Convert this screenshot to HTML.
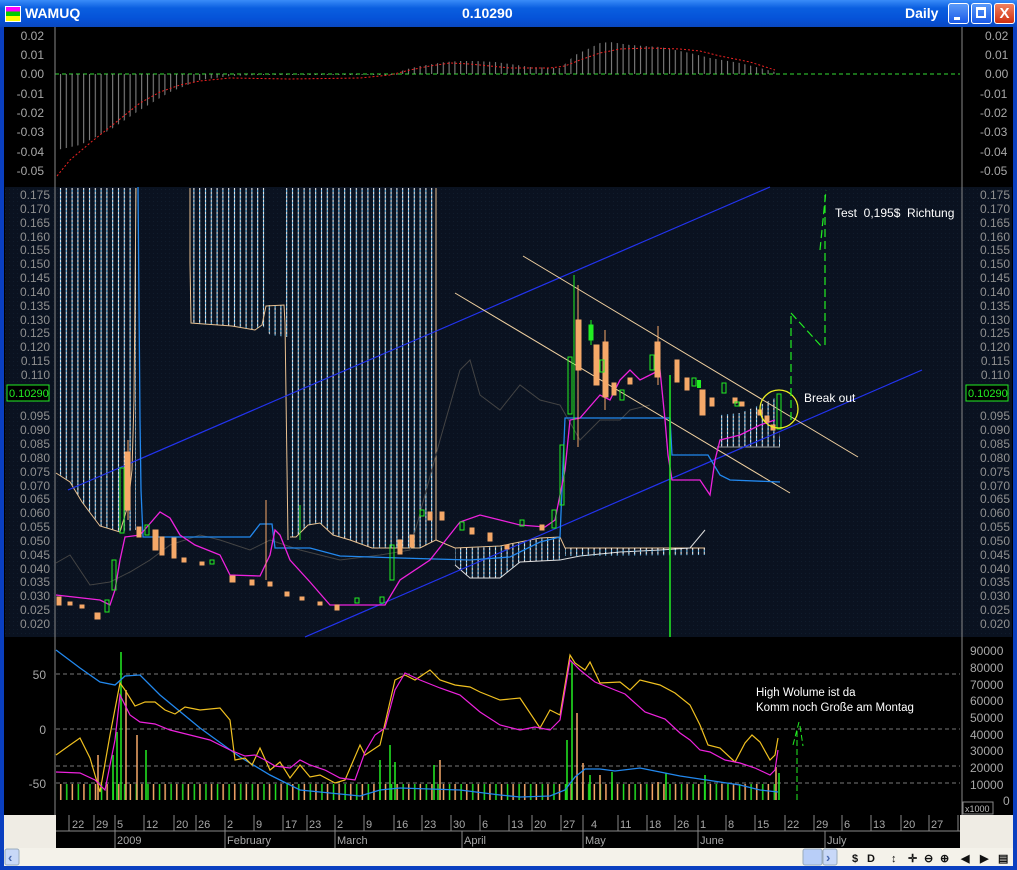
<!DOCTYPE html>
<html><head><meta charset="utf-8"><style>
html,body{margin:0;padding:0;width:1017px;height:870px;overflow:hidden;background:#0a3fc0;font-family:"Liberation Sans",sans-serif}
#title{position:absolute;left:0;top:0;width:1017px;height:27px;background:linear-gradient(#3a8cf8,#0a5fe0 30%,#0552d8 70%,#0a48c0);color:#fff}
.btn{position:absolute;top:3px;width:21px;height:21px;border:1px solid #fff;border-radius:3px;background:linear-gradient(#5a9af8,#1a5ae8);box-sizing:border-box}
svg text{font-family:"Liberation Sans",sans-serif}
</style></head><body>
<div id="title">
 <div style="position:absolute;left:5px;top:6px;width:14px;height:14px;background:linear-gradient(#f0f 0 33%,#0c0 33% 66%,#ff0 66%);border:1px solid #fff"></div>
 <div style="position:absolute;left:25px;top:5px;font-size:14px;font-weight:bold">WAMUQ</div>
 <div style="position:absolute;left:462px;top:5px;font-size:14px;font-weight:bold">0.10290</div>
 <div style="position:absolute;left:905px;top:5px;font-size:14px;font-weight:bold">Daily</div>
 <div class="btn" style="left:948px"><div style="position:absolute;left:5px;top:13px;width:6px;height:3px;background:#fff"></div></div>
 <div class="btn" style="left:971px"><div style="position:absolute;left:4px;top:3px;width:10px;height:11px;border:2px solid #fff;border-top-width:3px;box-sizing:border-box"></div></div>
 <div class="btn" style="left:994px;background:linear-gradient(#f08060,#d03010);color:#fff;font-weight:bold;font-size:15px;text-align:center;line-height:19px">X</div>
</div>
<svg width="1017" height="870" style="position:absolute;left:0;top:0" xmlns="http://www.w3.org/2000/svg">
<defs>
 <pattern id="hatch" width="5.8" height="4" patternUnits="userSpaceOnUse"><rect x="2" y="0" width="1" height="2" fill="#ffffff"/><rect x="2" y="2" width="1" height="2" fill="#7ad0ff"/></pattern>
 <pattern id="hist" width="5.8" height="10" patternUnits="userSpaceOnUse"><rect x="2" y="0" width="1" height="10" fill="#8a8a8a"/></pattern>
 <pattern id="volo" width="11.6" height="10" patternUnits="userSpaceOnUse"><rect x="2" y="0" width="1.5" height="10" fill="#f5a868"/><rect x="8" y="0" width="1.5" height="10" fill="#22dd22"/></pattern>
 <pattern id="dots" width="4" height="4" patternUnits="userSpaceOnUse"><rect width="4" height="4" fill="#0a1220"/><rect x="1" y="1" width="1" height="1" fill="#101c2c"/></pattern>
</defs>
<rect x="4" y="27" width="1009" height="821" fill="#000"/>
<rect x="5" y="187" width="1007" height="450" fill="url(#dots)"/>
<line x1="55" y1="74" x2="960" y2="74" stroke="#33dd33" stroke-dasharray="4,3"/>
<polygon points="57,74 57,150 80,145 110,130 140,110 170,92 200,80 230,76 260,75 400,75 400,74" fill="url(#hist)"/>
<polygon points="400,74 403,70 420,66 445,62 460,61 475,61 495,62 510,64 530,67 560,68 566,63 575,55 590,48 600,43 610,42 630,45 660,47 690,53 710,58 740,63 760,68 775,72 778,74" fill="url(#hist)"/>
<polyline points="57,176 70,160 90,143 110,127 125,115 140,103 160,92 180,85 200,81 230,78 290,79 360,78 390,75 410,70 430,66 450,63 470,64 490,66 510,68 550,68 565,66 580,60 600,53 620,49 650,48 680,49 700,51 720,56 750,62 775,70" fill="none" stroke="#ee2222" stroke-dasharray="2,2"/>
<line x1="55" y1="27" x2="55" y2="815" stroke="#888"/>
<line x1="962" y1="27" x2="962" y2="815" stroke="#888"/>
<g fill="#a8a8a8" font-size="12" text-anchor="end">
 <text x="44" y="40">0.02</text><text x="44" y="59">0.01</text><text x="44" y="78">0.00</text><text x="44" y="98">-0.01</text><text x="44" y="117">-0.02</text><text x="44" y="136">-0.03</text><text x="44" y="156">-0.04</text><text x="44" y="175">-0.05</text>
</g>
<g fill="#a8a8a8" font-size="12">
 <text x="985" y="40">0.02</text><text x="985" y="59">0.01</text><text x="985" y="78">0.00</text><text x="980" y="98">-0.01</text><text x="980" y="117">-0.02</text><text x="980" y="136">-0.03</text><text x="980" y="156">-0.04</text><text x="980" y="175">-0.05</text>
</g>
<g fill="#909090" font-size="12" text-anchor="end">
 <text x="50" y="199">0.175</text><text x="50" y="213">0.170</text><text x="50" y="227">0.165</text><text x="50" y="241">0.160</text><text x="50" y="254">0.155</text><text x="50" y="268">0.150</text><text x="50" y="282">0.145</text><text x="50" y="296">0.140</text><text x="50" y="310">0.135</text><text x="50" y="324">0.130</text><text x="50" y="337">0.125</text><text x="50" y="351">0.120</text><text x="50" y="365">0.115</text><text x="50" y="379">0.110</text><text x="50" y="420">0.095</text><text x="50" y="434">0.090</text><text x="50" y="448">0.085</text><text x="50" y="462">0.080</text><text x="50" y="476">0.075</text><text x="50" y="490">0.070</text><text x="50" y="503">0.065</text><text x="50" y="517">0.060</text><text x="50" y="531">0.055</text><text x="50" y="545">0.050</text><text x="50" y="559">0.045</text><text x="50" y="573">0.040</text><text x="50" y="586">0.035</text><text x="50" y="600">0.030</text><text x="50" y="614">0.025</text><text x="50" y="628">0.020</text>
</g>
<g fill="#909090" font-size="12" text-anchor="end">
 <text x="1010" y="199">0.175</text><text x="1010" y="213">0.170</text><text x="1010" y="227">0.165</text><text x="1010" y="241">0.160</text><text x="1010" y="254">0.155</text><text x="1010" y="268">0.150</text><text x="1010" y="282">0.145</text><text x="1010" y="296">0.140</text><text x="1010" y="310">0.135</text><text x="1010" y="324">0.130</text><text x="1010" y="337">0.125</text><text x="1010" y="351">0.120</text><text x="1010" y="365">0.115</text><text x="1010" y="379">0.110</text><text x="1010" y="420">0.095</text><text x="1010" y="434">0.090</text><text x="1010" y="448">0.085</text><text x="1010" y="462">0.080</text><text x="1010" y="476">0.075</text><text x="1010" y="490">0.070</text><text x="1010" y="503">0.065</text><text x="1010" y="517">0.060</text><text x="1010" y="531">0.055</text><text x="1010" y="545">0.050</text><text x="1010" y="559">0.045</text><text x="1010" y="573">0.040</text><text x="1010" y="586">0.035</text><text x="1010" y="600">0.030</text><text x="1010" y="614">0.025</text><text x="1010" y="628">0.020</text>
</g>
<rect x="7" y="385" width="42" height="16" fill="#000" stroke="#22ee22"/><text x="9" y="397" fill="#22ee22" font-size="11">0.10290</text>
<rect x="966" y="385" width="42" height="16" fill="#000" stroke="#22ee22"/><text x="968" y="397" fill="#22ee22" font-size="11">0.10290</text>
<polygon points="56,188 136,188 136,530 120,532 100,526 82,502 70,482 56,473" fill="url(#hatch)"/>
<polyline points="56,473 70,482 82,502 100,526 120,532 128,505 132,470 134,400 136,188" fill="none" stroke="#e8c090"/>
<polygon points="190,188 268,188 268,305 284,305 284,188 288,188 288,337 270,335 262,325 255,330 232,326 204,324 190,323" fill="url(#hatch)"/>
<polyline points="190,188 190,263 191,323 204,324 232,326 255,330 262,325 266,306 284,305 285,323 288,540" fill="none" stroke="#e8c090"/>
<polygon points="290,188 436,188 436,540 420,548 400,548 372,548 350,540 333,535 320,523 308,525 296,537 290,537" fill="url(#hatch)"/>
<polyline points="290,537 296,537 308,525 320,523 333,535 350,540 372,548 400,548 420,548 436,540 436,188" fill="none" stroke="#e8c090"/>
<polygon points="455,548 500,546 540,538 560,537 560,560 520,562 500,578 470,578 455,565" fill="url(#hatch)"/>
<polyline points="436,540 455,548 500,546 540,538 560,537 565,548 660,548 700,548 705,548" fill="none" stroke="#e8c090"/>
<polyline points="455,565 470,578 500,578 520,562 560,560 580,556 620,552 660,550 690,548 705,530" fill="none" stroke="#ddd"/>
<polygon points="565,548 705,548 705,555 565,556" fill="url(#hatch)"/>
<polygon points="720,415 740,413 760,405 775,398 780,440 780,447 717,447" fill="url(#hatch)"/>
<line x1="717" y1="447" x2="780" y2="447" stroke="#999"/>
<polyline points="56,563 70,555 90,585 110,582 130,572 150,560 170,545 200,535 220,540 250,550 270,540 300,550 340,560 380,555 410,550 440,440 460,370 470,360 480,395 500,410 520,385 540,400 560,405 580,440 600,420 620,420 630,410 650,405" fill="none" stroke="#444" />
<line x1="68" y1="490" x2="770" y2="187" stroke="#2233ee" stroke-width="1.2"/>
<line x1="305" y1="637" x2="922" y2="370" stroke="#2233ee" stroke-width="1.2"/>
<line x1="523" y1="256" x2="858" y2="457" stroke="#f0d0a0"/>
<line x1="455" y1="293" x2="790" y2="493" stroke="#f0d0a0"/>
<polyline points="138,187 140,420 141,490 143,537 250,537 260,524 272,524 275,548 310,548 340,556 400,558 470,560 510,557 540,542 560,537 565,418 670,418 672,455 708,455 720,475 730,480 780,482" fill="none" stroke="#2288ee" stroke-width="1.3"/>
<polyline points="56,595 100,600 110,605 115,590 120,560 125,537 140,535 160,512 170,518 180,535 195,545 220,555 230,575 260,576 270,555 275,530 280,535 290,560 310,582 330,605 385,605 400,580 430,560 460,522 480,515 500,520 520,525 545,527 555,520 565,470 570,420 580,418 600,395 610,400 620,380 630,370 640,380 650,375 660,370 665,420 668,455 672,480 700,480 710,495 715,460 720,440 740,435 760,425 775,420" fill="none" stroke="#ee22dd" stroke-width="1.3"/>
<g fill="#f5a868" stroke="#f5a868">
 <rect x="57" y="597" width="4" height="8"/><rect x="68" y="602" width="4" height="3"/><rect x="80" y="605" width="4" height="3"/><rect x="95" y="613" width="5" height="6"/><rect x="125" y="452" width="5" height="58"/><rect x="137" y="527" width="4" height="10"/><rect x="153" y="530" width="5" height="20"/><rect x="160" y="537" width="4" height="18"/><rect x="172" y="538" width="4" height="20"/><rect x="182" y="558" width="4" height="4"/><rect x="200" y="562" width="4" height="3"/><rect x="230" y="576" width="5" height="6"/><rect x="250" y="580" width="4" height="5"/><rect x="268" y="582" width="4" height="4"/><rect x="285" y="592" width="4" height="4"/><rect x="300" y="597" width="4" height="3"/><rect x="318" y="602" width="4" height="3"/><rect x="335" y="605" width="4" height="5"/><rect x="398" y="540" width="4" height="14"/><rect x="410" y="535" width="4" height="12"/><rect x="428" y="512" width="4" height="8"/><rect x="440" y="512" width="4" height="8"/><rect x="470" y="528" width="4" height="6"/><rect x="488" y="533" width="4" height="8"/><rect x="505" y="545" width="4" height="4"/><rect x="540" y="525" width="4" height="5"/>
 <rect x="576" y="320" width="5" height="50"/><rect x="594" y="345" width="5" height="40"/><rect x="603" y="342" width="5" height="55"/><rect x="612" y="383" width="4" height="12"/><rect x="628" y="378" width="4" height="6"/><rect x="655" y="342" width="5" height="35"/><rect x="675" y="360" width="4" height="22"/><rect x="685" y="378" width="4" height="12"/><rect x="700" y="390" width="5" height="25"/><rect x="710" y="398" width="4" height="8"/><rect x="733" y="398" width="4" height="5"/><rect x="740" y="402" width="4" height="4"/><rect x="758" y="410" width="4" height="5"/><rect x="765" y="416" width="4" height="6"/><rect x="771" y="425" width="4" height="5"/>
</g>
<g stroke="#f5a868"><line x1="128" y1="440" x2="128" y2="520"/><line x1="578" y1="285" x2="578" y2="447"/><line x1="658" y1="326" x2="658" y2="385"/><line x1="266" y1="500" x2="266" y2="580"/><line x1="605" y1="330" x2="605" y2="410"/></g>
<g fill="none" stroke="#22ee22">
 <rect x="105" y="600" width="4" height="12"/><rect x="112" y="560" width="4" height="30"/><rect x="120" y="468" width="4" height="65"/><rect x="145" y="525" width="4" height="10"/><rect x="210" y="560" width="4" height="4"/><rect x="355" y="598" width="4" height="5"/><rect x="380" y="597" width="4" height="6"/><rect x="390" y="545" width="4" height="35"/><rect x="420" y="510" width="4" height="6"/><rect x="460" y="522" width="4" height="8"/><rect x="520" y="520" width="4" height="6"/><rect x="552" y="510" width="4" height="18"/><rect x="560" y="445" width="4" height="60"/><rect x="568" y="357" width="4" height="57"/><rect x="589" y="325" width="4" height="15"/><rect x="600" y="360" width="4" height="12"/><rect x="620" y="390" width="4" height="10"/><rect x="650" y="355" width="4" height="15"/><rect x="692" y="378" width="4" height="8"/><rect x="722" y="383" width="4" height="10"/><rect x="735" y="402" width="4" height="4"/><rect x="777" y="394" width="4" height="35"/>
</g>
<g stroke="#22ee22"><line x1="574" y1="275" x2="574" y2="440"/><line x1="591" y1="320" x2="591" y2="345"/><line x1="670" y1="375" x2="670" y2="637" stroke-width="1.5"/><line x1="300" y1="505" x2="300" y2="540"/></g>
<g fill="#22ee22"><rect x="589" y="325" width="4" height="15"/><rect x="697" y="380" width="4" height="8"/></g>
<circle cx="779" cy="409" r="19" fill="none" stroke="#eeee22" stroke-width="1.3"/>
<g stroke="#22ee22" stroke-dasharray="8,4" fill="none" stroke-width="1.2">
 <line x1="791" y1="420" x2="791" y2="312"/><line x1="791" y1="313" x2="822" y2="347"/><line x1="825" y1="345" x2="825" y2="195"/><line x1="820" y1="250" x2="826" y2="190"/>
</g>
<text x="835" y="217" fill="#fff" font-size="12" style="white-space:pre" xml:space="preserve">Test  0,195$  Richtung</text>
<text x="804" y="402" fill="#fff" font-size="12">Break out</text>
<g stroke="#777" stroke-dasharray="4,3"><line x1="56" y1="674" x2="960" y2="674"/><line x1="56" y1="729" x2="960" y2="729"/><line x1="56" y1="766" x2="960" y2="766"/><line x1="56" y1="783" x2="960" y2="783"/></g>
<rect x="56" y="784" width="722" height="16" fill="url(#volo)"/>
<g stroke-width="1.5">
 <line x1="121" y1="800" x2="121" y2="652" stroke="#22ee22"/><line x1="117" y1="800" x2="117" y2="732" stroke="#22ee22"/><line x1="126" y1="800" x2="126" y2="690" stroke="#f5a868"/><line x1="113" y1="800" x2="113" y2="755" stroke="#22ee22"/><line x1="137" y1="800" x2="137" y2="735" stroke="#f5a868"/><line x1="98" y1="800" x2="98" y2="755" stroke="#f5a868"/><line x1="146" y1="800" x2="146" y2="750" stroke="#22ee22"/><line x1="380" y1="800" x2="380" y2="760" stroke="#22ee22"/><line x1="390" y1="800" x2="390" y2="745" stroke="#22ee22"/><line x1="395" y1="800" x2="395" y2="762" stroke="#22ee22"/><line x1="567" y1="800" x2="567" y2="740" stroke="#22ee22"/><line x1="572" y1="800" x2="572" y2="662" stroke="#22ee22"/><line x1="577" y1="800" x2="577" y2="713" stroke="#f5a868"/><line x1="583" y1="800" x2="583" y2="763" stroke="#f5a868"/><line x1="590" y1="800" x2="590" y2="775" stroke="#22ee22"/><line x1="600" y1="800" x2="600" y2="775" stroke="#f5a868"/><line x1="612" y1="800" x2="612" y2="772" stroke="#22ee22"/><line x1="666" y1="800" x2="666" y2="773" stroke="#22ee22"/><line x1="658" y1="800" x2="658" y2="782" stroke="#f5a868"/><line x1="705" y1="800" x2="705" y2="775" stroke="#22ee22"/><line x1="434" y1="800" x2="434" y2="765" stroke="#22ee22"/><line x1="440" y1="800" x2="440" y2="760" stroke="#f5a868"/><line x1="776" y1="800" x2="776" y2="767" stroke="#f5a868"/><line x1="779" y1="800" x2="779" y2="773" stroke="#22ee22"/>
</g>
<polyline points="56,650 80,668 100,682 115,685 125,676 140,675 160,695 200,728 240,757 270,775 300,790 330,793 360,796 380,790 400,788 460,790 500,795 520,797 550,796 565,790 575,777 585,769 600,769 615,771 640,768 660,772 680,776 700,779 720,782 740,785 760,790 778,792" fill="none" stroke="#2288ee" stroke-width="1.3"/>
<polyline points="56,755 70,745 80,738 90,758 100,792 110,735 120,683 125,690 135,706 145,702 155,702 165,710 175,714 185,707 200,710 220,708 230,720 235,760 245,758 252,765 260,748 270,770 280,762 290,778 300,765 310,777 320,775 335,783 345,780 360,745 365,755 380,745 395,680 405,675 415,680 430,670 440,680 455,685 470,687 480,692 500,700 520,698 540,728 550,710 560,715 570,655 575,663 585,670 590,662 600,683 620,682 630,690 640,680 660,685 675,693 690,705 700,725 708,745 720,748 735,762 745,743 752,735 760,742 770,760 775,755 778,738" fill="none" stroke="#f0c020" stroke-width="1.2"/>
<polyline points="56,772 80,773 95,780 105,790 115,740 120,695 130,715 140,722 155,724 170,730 190,735 210,740 230,750 245,756 255,755 265,760 275,766 290,768 300,760 310,765 325,770 340,778 355,780 365,752 375,735 385,728 395,690 405,673 420,680 440,688 460,695 480,712 500,725 520,730 535,727 550,730 560,720 570,660 580,670 595,682 615,690 625,694 645,712 665,719 680,733 690,740 700,750 710,752 725,760 740,763 755,768 770,775 775,770 778,750" fill="none" stroke="#ee22dd" stroke-width="1.2"/>
<g stroke="#22ee22" stroke-dasharray="6,3"><line x1="797" y1="800" x2="797" y2="728"/><line x1="793" y1="745" x2="799" y2="722"/><line x1="800" y1="726" x2="803" y2="746"/></g>
<text x="756" y="696" fill="#fff" font-size="11.5">High Wolume ist da</text>
<text x="756" y="711" fill="#fff" font-size="11.5">Komm noch Große am Montag</text>
<g fill="#a8a8a8" font-size="12" text-anchor="end"><text x="46" y="679">50</text><text x="46" y="734">0</text><text x="46" y="788">-50</text></g>
<g fill="#a8a8a8" font-size="12"><text x="970" y="655">90000</text><text x="970" y="672">80000</text><text x="970" y="689">70000</text><text x="970" y="705">60000</text><text x="970" y="722">50000</text><text x="970" y="739">40000</text><text x="970" y="755">30000</text><text x="970" y="772">20000</text><text x="970" y="789">10000</text><text x="1003" y="805">0</text></g>
<rect x="963" y="802" width="30" height="12" fill="none" stroke="#888"/><text x="965" y="812" fill="#bbb" font-size="9">x1000</text>
<rect x="4" y="815" width="52" height="33" fill="#efece4"/>
<rect x="960" y="815" width="53" height="33" fill="#efece4"/>
<rect x="56" y="815" width="904" height="33" fill="#000"/>
<line x1="56" y1="831" x2="960" y2="831" stroke="#888"/>
<g stroke="#888"><line x1="69" y1="815" x2="69" y2="831"/><line x1="94" y1="815" x2="94" y2="831"/><line x1="115" y1="815" x2="115" y2="848"/><line x1="144" y1="815" x2="144" y2="831"/><line x1="174" y1="815" x2="174" y2="831"/><line x1="196" y1="815" x2="196" y2="831"/><line x1="225" y1="815" x2="225" y2="848"/><line x1="254" y1="815" x2="254" y2="831"/><line x1="283" y1="815" x2="283" y2="831"/><line x1="307" y1="815" x2="307" y2="831"/><line x1="335" y1="815" x2="335" y2="848"/><line x1="364" y1="815" x2="364" y2="831"/><line x1="394" y1="815" x2="394" y2="831"/><line x1="422" y1="815" x2="422" y2="831"/><line x1="451" y1="815" x2="451" y2="831"/><line x1="462" y1="831" x2="462" y2="848"/><line x1="480" y1="815" x2="480" y2="831"/><line x1="509" y1="815" x2="509" y2="831"/><line x1="532" y1="815" x2="532" y2="831"/><line x1="561" y1="815" x2="561" y2="831"/><line x1="583" y1="815" x2="583" y2="848"/><line x1="618" y1="815" x2="618" y2="831"/><line x1="647" y1="815" x2="647" y2="831"/><line x1="675" y1="815" x2="675" y2="831"/><line x1="698" y1="815" x2="698" y2="848"/><line x1="726" y1="815" x2="726" y2="831"/><line x1="755" y1="815" x2="755" y2="831"/><line x1="785" y1="815" x2="785" y2="831"/><line x1="814" y1="815" x2="814" y2="831"/><line x1="825" y1="831" x2="825" y2="848"/><line x1="842" y1="815" x2="842" y2="831"/><line x1="871" y1="815" x2="871" y2="831"/><line x1="901" y1="815" x2="901" y2="831"/><line x1="929" y1="815" x2="929" y2="831"/><line x1="958" y1="815" x2="958" y2="831"/></g>
<g fill="#a8a8a8" font-size="11">
 <text x="72" y="828">22</text><text x="96" y="828">29</text><text x="117" y="828">5</text><text x="146" y="828">12</text><text x="176" y="828">20</text><text x="198" y="828">26</text><text x="227" y="828">2</text><text x="256" y="828">9</text><text x="285" y="828">17</text><text x="309" y="828">23</text><text x="337" y="828">2</text><text x="366" y="828">9</text><text x="396" y="828">16</text><text x="424" y="828">23</text><text x="453" y="828">30</text><text x="482" y="828">6</text><text x="511" y="828">13</text><text x="534" y="828">20</text><text x="563" y="828">27</text><text x="591" y="828">4</text><text x="620" y="828">11</text><text x="649" y="828">18</text><text x="677" y="828">26</text><text x="700" y="828">1</text><text x="728" y="828">8</text><text x="757" y="828">15</text><text x="787" y="828">22</text><text x="816" y="828">29</text><text x="844" y="828">6</text><text x="873" y="828">13</text><text x="903" y="828">20</text><text x="931" y="828">27</text>
 <text x="117" y="844">2009</text><text x="227" y="844">February</text><text x="337" y="844">March</text><text x="464" y="844">April</text><text x="585" y="844">May</text><text x="700" y="844">June</text><text x="827" y="844">July</text>
</g>
<rect x="4" y="848" width="1009" height="18" fill="#f4f2ea"/>
<rect x="5" y="849" width="14" height="16" rx="2" fill="#c8d8f8" stroke="#9ab"/><text x="8" y="862" fill="#4a6ab0" font-size="13" font-weight="bold">‹</text>
<rect x="803" y="849" width="19" height="16" rx="2" fill="#b8cef8" stroke="#9ab"/>
<rect x="823" y="849" width="14" height="16" rx="2" fill="#c8d8f8" stroke="#9ab"/><text x="826" y="862" fill="#4a6ab0" font-size="13" font-weight="bold">›</text>
<g fill="#111" font-size="11" font-weight="bold"><text x="852" y="862">$</text><text x="867" y="862">D</text><text x="891" y="862">↕</text><text x="908" y="862">✛</text><text x="924" y="862">⊖</text><text x="940" y="862">⊕</text><text x="961" y="862">◀</text><text x="980" y="862">▶</text><text x="998" y="862">▤</text></g>
</svg>
</body></html>
